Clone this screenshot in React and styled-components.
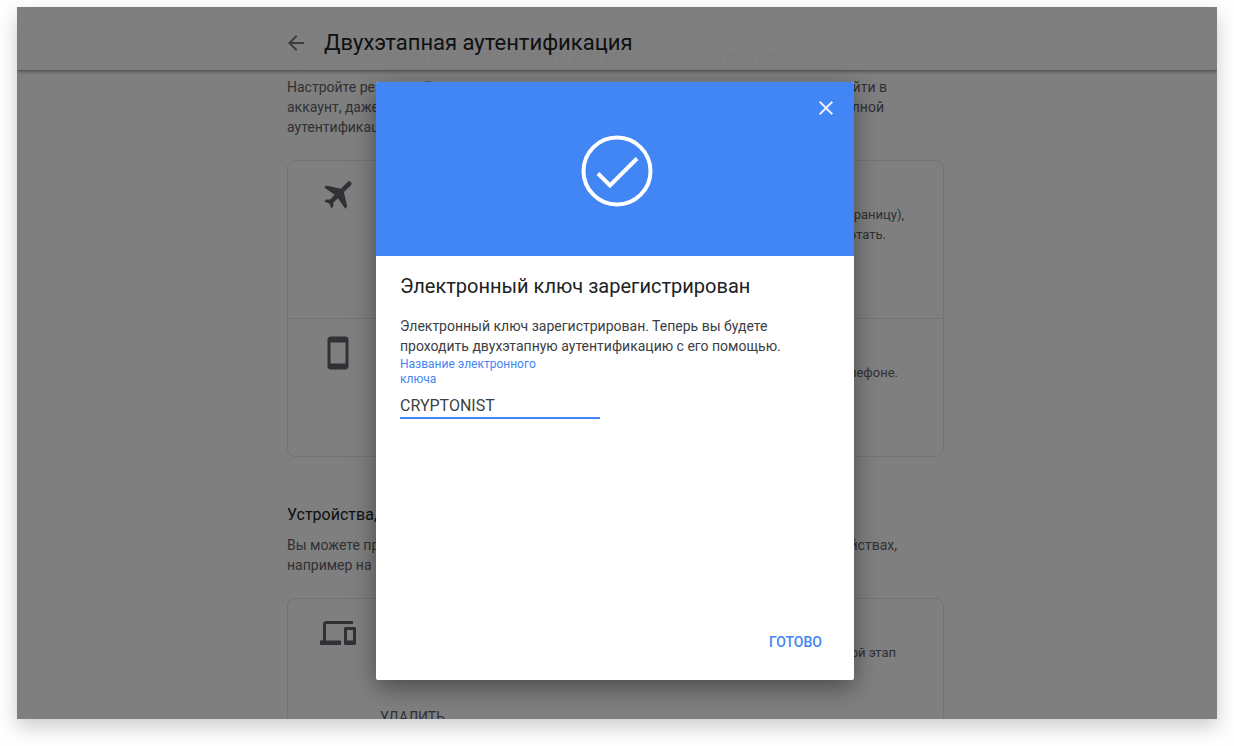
import React from 'react'
import styled, { createGlobalStyle } from 'styled-components'
import { MdArrowBack, MdClose, MdDevices, MdStayCurrentPortrait } from 'react-icons/md'

const App = () => {
    return (
        <>
            <GlobalStyle />
            <Frame>
                <Page>
                    <Content>
                        <Section>
                            <h2>Добавьте дополнительные варианты для второго этапа аутентификации</h2>
                            <Line $width={600}><span>Настройте резервный</span><span>войти в</span></Line>
                            <Line $width={597}><span>аккаунт, даже если</span><span>полной</span></Line>
                            <Line $width={597}><span>аутентификации</span></Line>
                            <Card>
                                <Row $height={157}>
                                    <PlaneIcon />
                                    <div>
                                        <Line $width={524} $small><span></span><span>границу),</span></Line>
                                        <Line $width={506} $small><span></span><span>работать.</span></Line>
                                    </div>
                                </Row>
                                <Row $height={138}>
                                    <MdStayCurrentPortrait />
                                    <div>
                                        <Line $width={518} $small><span></span><span>телефоне.</span></Line>
                                    </div>
                                </Row>
                            </Card>
                        </Section>
                        <Section>
                            <h2>Устройства, которым</h2>
                            <Line $width={610}><span>Вы можете пропускать</span><span>устройствах,</span></Line>
                            <Line $width={610}><span>например на</span></Line>
                            <Card>
                                <Row $height={157}>
                                    <MdDevices />
                                    <div>
                                        <Line $width={516} $small><span></span><span>второй этап</span></Line>
                                        <RemoveButton type="button">УДАЛИТЬ</RemoveButton>
                                    </div>
                                </Row>
                            </Card>
                        </Section>
                    </Content>
                </Page>
                <Header>
                    <HeaderInner>
                        <IconButton type="button" aria-label="Назад"><MdArrowBack /></IconButton>
                        <h1>Двухэтапная аутентификация</h1>
                    </HeaderInner>
                </Header>
                <Overlay>
                    <Dialog role="dialog" aria-modal="true" aria-labelledby="dialog-title">
                        <Banner>
                            <CloseButton type="button" aria-label="Закрыть"><MdClose /></CloseButton>
                            <svg width="76" height="72" viewBox="0 0 76 72" fill="none" stroke="#fff" strokeWidth="4">
                                <circle cx="40" cy="36" r="33.5" />
                                <path d="M21 38.5L33 50.5L60 23.5" />
                            </svg>
                        </Banner>
                        <DialogBody>
                            <h2 id="dialog-title">Электронный ключ зарегистрирован</h2>
                            <p>Электронный ключ зарегистрирован. Теперь вы будете проходить двухэтапную аутентификацию с его помощью.</p>
                            <Field>
                                <label htmlFor="key-name">Название электронного ключа</label>
                                <input id="key-name" type="text" defaultValue="CRYPTONIST" />
                            </Field>
                        </DialogBody>
                        <DialogFooter>
                            <DoneButton type="button">ГОТОВО</DoneButton>
                        </DialogFooter>
                    </Dialog>
                </Overlay>
            </Frame>
        </>
    )
}

const PlaneIcon = () => (
    <svg viewBox="0 0 36 36" fill="currentColor" aria-hidden="true">
        <path d="M27.4 5.2C28.6 4 30 4.1 30.9 4.9C31.8 5.8 31.8 7.2 30.7 8.4L23.9 15L27.2 29.6L25.2 31.8L18 21.2L13.4 25.6L13.2 29.6L11.4 31.6L9.4 26.4L4.2 24.4L6.1 22.6L10.1 22.4L14.7 17.8L4.2 10.6L6.3 8.5L20.8 11.8Z" />
    </svg>
)

const GlobalStyle = createGlobalStyle`
* {
    margin: 0;
    padding: 0;
    box-sizing: border-box;
}
body {
    background: #fefefe;
    font-family: Roboto, sans-serif;
    font-size: 14px;
    line-height: 20px;
    color: #5f6368;
}
button, input {
    font: inherit;
    color: inherit;
    border: none;
    background: none;
}
button {
    cursor: pointer;
}
`

const Frame = styled.main`
position: relative;
height: calc(100vh - 34px);
margin: 7px 17px 27px;
background: #fff;
box-shadow: 0 8px 18px rgba(0, 0, 0, 0.2);
`

const Page = styled.div`
height: 100%;
overflow: hidden;
padding: 38px 3px 0 0;
`

const Content = styled.div`
max-width: 657px;
margin: 0 auto;
`

const Section = styled.section`
margin-bottom: 46px;
h2{
    font-size: 16px;
    line-height: 24px;
    font-weight: 400;
    color: #202124;
    margin-bottom: 8px;
    white-space: nowrap;
}
`

const Line = styled.p`
display: flex;
justify-content: space-between;
max-width: ${props => props.$width}px;
font-size: ${props => props.$small ? '13px' : '14px'};
white-space: nowrap;
`

const Card = styled.div`
margin-top: 23px;
border: 1px solid #e4e6e9;
border-radius: 8px;
`

const Row = styled.div`
display: flex;
gap: 24px;
min-height: ${props => props.$height}px;
padding: 16px 32px;
& + &{
    border-top: 1px solid #e4e6e9;
}
> svg{
    width: 36px;
    height: 36px;
    flex: none;
}
> div{
    flex: 1;
    padding-top: 28px;
}
`

const RemoveButton = styled.button`
margin-top: 44px;
`

const Header = styled.header`
position: absolute;
inset: 0 0 auto 0;
height: 63px;
padding-right: 4px;
background: rgba(255, 255, 255, 0.97);
box-shadow: 0 1px 4px rgba(0, 0, 0, 0.5);
clip-path: inset(0 0 -8px 0);
`

const HeaderInner = styled.div`
display: flex;
align-items: center;
gap: 16px;
height: 72px;
max-width: 662px;
margin: 0 auto;
h1{
    font-size: 22px;
    line-height: 28px;
    font-weight: 400;
    color: #202124;
}
`

const IconButton = styled.button`
display: flex;
color: #77797c;
svg{
    width: 24px;
    height: 24px;
}
`

const Overlay = styled.div`
position: absolute;
inset: 0;
display: flex;
justify-content: center;
align-items: flex-start;
padding: 75px 4px 0 0;
background: rgba(0, 0, 0, 0.5);
`

const Dialog = styled.div`
display: flex;
flex-direction: column;
width: 100%;
max-width: 478px;
min-height: 598px;
border-radius: 2px;
background: #fff;
box-shadow: 0 8px 24px rgba(0, 0, 0, 0.4);
`

const Banner = styled.div`
position: relative;
display: flex;
justify-content: center;
padding: 53px 0 49px;
border-radius: 2px 2px 0 0;
background: #4285f4;
`

const CloseButton = styled(IconButton)`
position: absolute;
top: 14px;
right: 16px;
color: #e8eefb;
`

const DialogBody = styled.div`
padding: 16px 24px;
h2{
    font-size: 20px;
    line-height: 28px;
    font-weight: 400;
    color: #202124;
    margin-bottom: 16px;
}
p{
    color: #3c4043;
}
`

const Field = styled.div`
display: flex;
flex-direction: column;
max-width: 200px;
padding-top: 1px;
label{
    max-width: 160px;
    font-size: 12px;
    line-height: 15px;
    color: #4285f4;
}
input{
    width: 100%;
    height: 25px;
    margin-top: 7px;
    border-bottom: 2px solid #4285f4;
    outline: none;
    font-size: 16px;
    color: #3c4043;
}
`

const DialogFooter = styled.div`
display: flex;
justify-content: flex-end;
margin-top: auto;
padding: 0 16px 20px;
`

const DoneButton = styled.button`
height: 36px;
padding: 0 16px;
font-weight: 500;
color: #4285f4;
`

export default App
